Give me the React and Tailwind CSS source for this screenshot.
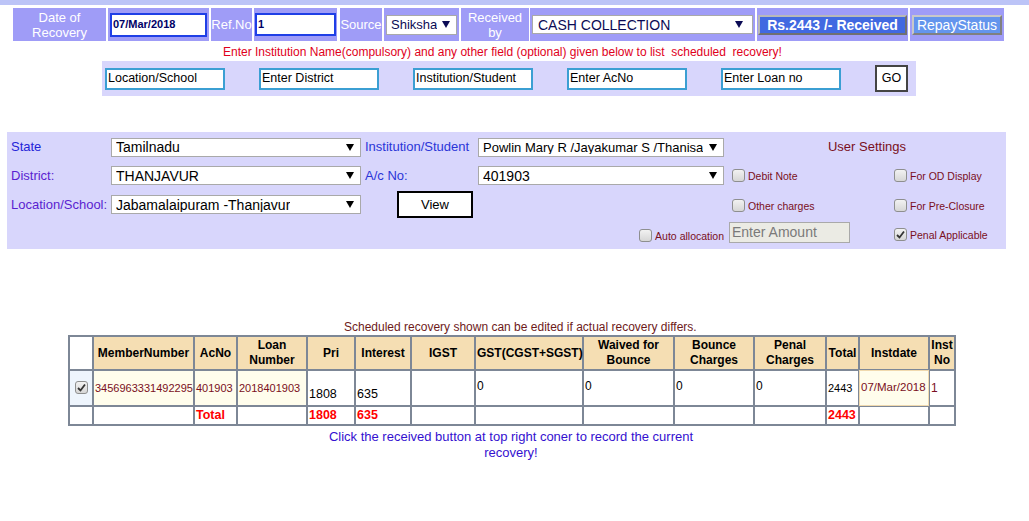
import React from "react";

// arrow used by the fake select boxes
const Arrow = ({ color = "#000" }) => (
  <svg width="8" height="7" viewBox="0 0 8 7" className="shrink-0">
    <polygon points="0,0 8,0 4,7" fill={color} />
  </svg>
);

const Select = ({ value, className = "", text = "text-black text-[14px]", arrow = "#000" }) => (
  <div
    className={`flex items-center justify-between gap-[4px] bg-white border border-[#a9a9a9] pl-[4px] pr-[6px] leading-none font-['Liberation_Sans',Arial,sans-serif] ${text} ${className}`}
  >
    <span className="whitespace-nowrap overflow-hidden">{value}</span>
    <Arrow color={arrow} />
  </div>
);

const Check = ({ checked = false }) => (
  <span className="inline-flex w-[13px] h-[13px] shrink-0 items-center justify-center rounded-[3px] border border-[#8e8f8f] bg-gradient-to-b from-[#f2f2f2] to-[#d6d6d6]">
    {checked && (
      <svg width="9" height="9" viewBox="0 0 9 9">
        <path d="M1 5 L3.5 7.5 L8 1.5" fill="none" stroke="#333" strokeWidth="1.8" />
      </svg>
    )}
  </span>
);

const HeadCell = ({ className = "", children }) => (
  <div className={`bg-[#9f9cf7] flex items-center justify-center text-white text-[13px] leading-[15px] text-center ${className}`}>
    {children}
  </div>
);

const Opt = ({ label, checked }) => (
  <div className="flex items-center gap-[3px]">
    <Check checked={checked} />
    <span className="text-[10.5px] text-[#7a0f22] mt-[3px]">{label}</span>
  </div>
);

const cols = [24, 101, 43, 70, 48, 56, 64, 108, 91, 80, 72, 33, 70, 26];

const th = "border border-[#7d8796] bg-[#f5deb3] font-bold text-[12px] leading-[15px] text-center px-[1px]";
const td = "border border-[#7d8796] text-[11px] px-[1px]";
const tot = "border border-[#7d8796] text-[#ff0000] font-bold text-[12.5px] leading-[15px] px-[1px]";

export default function App() {
  return (
    <div className="w-[1029px] h-[521px] bg-white overflow-hidden font-['Liberation_Sans',Arial,sans-serif]">
      <div className="h-[5px] bg-[#bcc4f7]" />

      {/* header row */}
      <div className="flex gap-[2px] ml-[13px] mt-[3px] h-[33px]">
        <HeadCell className="w-[93px]">
          Date of
          <br />
          Recovery
        </HeadCell>
        <div className="w-[101px] bg-[#9f9cf7] flex items-center px-[2px]">
          <div className="w-full h-[24px] border-2 border-[#1f3fe6] bg-white flex items-center pl-px text-[11px] font-bold text-[#000066]">
            07/Mar/2018
          </div>
        </div>
        <HeadCell className="w-[41px]">Ref.No</HeadCell>
        <div className="w-[83px] bg-[#9f9cf7] flex items-center px-[1px]">
          <div className="w-full h-[23px] border-2 border-[#1f3fe6] bg-white flex items-center pl-px text-[11px] font-bold text-[#000066]">
            1
          </div>
        </div>
        <HeadCell className="w-[42px] ml-px">Source</HeadCell>
        <div className="w-[75px] bg-[#9f9cf7] flex items-center px-[2px]">
          <Select value="Shiksha" className="w-full h-[20px] pl-[4px] pr-[4px]" text="text-[#0b0b55] text-[13px]" arrow="#0b0b55" />
        </div>
        <HeadCell className="w-[68px]">
          Received
          <br />
          by
        </HeadCell>
        <div className="w-[225px] bg-[#9f9cf7] flex items-center px-[2px] -ml-px">
          <Select value="CASH COLLECTION" className="w-full h-[19px] pl-[5px] pr-[9px]" text="text-[#0b0b55] text-[14px]" arrow="#0b0b55" />
        </div>
        <div className="w-[151px] bg-[#9f9cf7] flex items-center px-px">
          <button className="w-full h-[20px] bg-[#4169e1] border-2 border-t-[#b8b8b8] border-l-[#b8b8b8] border-b-[#707070] border-r-[#707070] text-white font-bold text-[14px] leading-none">
            Rs.2443 /- Received
          </button>
        </div>
        <div className="w-[94px] bg-[#9f9cf7] flex items-center px-[2px]">
          <button className="w-full h-[20px] bg-[#6495ed] border-2 border-t-[#c8c8c8] border-l-[#c8c8c8] border-b-[#808080] border-r-[#808080] text-white text-[14px] leading-none">
            RepayStatus
          </button>
        </div>
      </div>

      <p className="mt-[3px] h-[17px] leading-[17px] text-[12px] text-[#e0001b] pl-[223px] whitespace-pre">
        Enter Institution Name(compulsory) and any other field (optional) given below to list  scheduled  recovery!
      </p>

      {/* quick search */}
      <div className="ml-[102px] w-[814px] h-[35px] bg-[#d8d6fc] flex items-center pl-[3px] gap-[34px]">
        {["Location/School", "Enter District", "Institution/Student", "Enter AcNo", "Enter Loan no"].map((p) => (
          <div
            key={p}
            className="w-[120px] h-[22px] border-2 border-[#3b9fd3] bg-white flex items-center pl-px text-[12.5px] text-black whitespace-nowrap overflow-hidden"
          >
            {p}
          </div>
        ))}
        <button className="w-[33px] h-[27px] border-2 border-[#444] bg-white text-[12.5px] text-black">GO</button>
      </div>

      {/* filter panel */}
      <div className="ml-[7px] mt-[36px] w-[999px] h-[117px] bg-[#d8d6fc] pt-px pl-[4px] grid grid-cols-[100px_254px_113px_250px_162px_1fr] grid-rows-[28px_29px_29px_29px] items-center text-[13px]">
        <span className="text-[#2424d8]">State</span>
        <Select value="Tamilnadu" className="w-[250px] h-[19px]" />
        <span className="text-[#2a35d8]">Institution/Student</span>
        <Select value="Powlin Mary R /Jayakumar S /Thanisa" className="w-[246px] h-[19px] pr-[5px]" text="text-black text-[13px]" />
        <span className="col-span-2 text-center text-[#7a0f22] text-[13px]">User Settings</span>

        <span className="text-[#5a1fd0]">District:</span>
        <Select value="THANJAVUR" className="w-[250px] h-[19px]" />
        <span className="text-[#2a35d8]">A/c No:</span>
        <Select value="401903" className="w-[246px] h-[19px]" />
        <div className="pl-[4px]">
          <Opt label="Debit Note" />
        </div>
        <div className="pl-[4px]">
          <Opt label="For OD Display" />
        </div>

        <span className="text-[#5a1fd0]">Location/School:</span>
        <Select value="Jabamalaipuram -Thanjavur" className="w-[250px] h-[19px]" />
        <div className="col-span-2 pl-[32px]">
          <button className="w-[76px] h-[27px] border-2 border-black bg-white text-[13px] text-black">View</button>
        </div>
        <div className="pl-[4px] mt-[2px]">
          <Opt label="Other charges" />
        </div>
        <div className="pl-[4px] mt-[2px]">
          <Opt label="For Pre-Closure" />
        </div>

        <span />
        <span />
        <div className="col-span-2 flex justify-end pr-[4px] mt-[4px]">
          <Opt label="Auto allocation" />
        </div>
        <div className="pl-px mt-[-2px]">
          <div className="w-[121px] h-[21px] border border-[#a9a9a9] bg-[#ebebe4] flex items-center pl-[2px] text-[14px] text-[#7a7a7a]">
            Enter Amount
          </div>
        </div>
        <div className="pl-[4px] mt-[2px]">
          <Opt label="Penal Applicable" checked />
        </div>
      </div>

      <p className="mt-[71px] h-[15px] leading-[15px] text-[12px] text-[#6e1a1a] pl-[344px]">
        Scheduled recovery shown can be edited if actual recovery differs.
      </p>

      {/* schedule table */}
      <table className="ml-[68px] border-separate border-spacing-0 border border-[#7d8796] table-fixed w-[886px]">
        <colgroup>
          {cols.map((w, i) => (
            <col key={i} style={{ width: w }} />
          ))}
        </colgroup>
        <thead>
          <tr className="h-[34px]">
            <th className="border border-[#7d8796] bg-white" />
            <th className={th}>MemberNumber</th>
            <th className={th}>AcNo</th>
            <th className={th}>
              Loan
              <br />
              Number
            </th>
            <th className={th}>Pri</th>
            <th className={th}>Interest</th>
            <th className={th}>IGST</th>
            <th className={`${th} whitespace-nowrap`}>GST(CGST+SGST)</th>
            <th className={th}>
              Waived for
              <br />
              Bounce
            </th>
            <th className={th}>
              Bounce
              <br />
              Charges
            </th>
            <th className={th}>
              Penal
              <br />
              Charges
            </th>
            <th className={th}>Total</th>
            <th className={th}>Instdate</th>
            <th className={th}>
              Inst
              <br />
              No
            </th>
          </tr>
        </thead>
        <tbody>
          <tr className="h-[36px]">
            <td className={`${td} bg-[#eef5fd] text-center`}>
              <span className="inline-flex mt-[2px]">
                <Check checked />
              </span>
            </td>
            <td className={`${td} bg-[#fffdec] text-[#7a0f22] whitespace-nowrap overflow-hidden`}>3456963331492295</td>
            <td className={`${td} bg-[#fffdec] text-[#7a0f22]`}>401903</td>
            <td className={`${td} bg-[#fffdec] text-[#7a0f22]`}>2018401903</td>
            <td className={`${td} text-black align-bottom text-[12.5px] pb-[1px]`}>1808</td>
            <td className={`${td} text-black align-bottom text-[12.5px] pb-[1px]`}>635</td>
            <td className={td} />
            <td className={`${td} text-black align-top pt-[6px] text-[12px]`}>0</td>
            <td className={`${td} text-black align-top pt-[6px] text-[12px]`}>0</td>
            <td className={`${td} text-black align-top pt-[6px] text-[12px]`}>0</td>
            <td className={`${td} text-black align-top pt-[6px] text-[12px]`}>0</td>
            <td className={`${td} text-black`}>2443</td>
            <td className="border border-[#f0d9ae] bg-[#fffdec] text-[#7a0f22] text-[11.5px] px-[1px] whitespace-nowrap">07/Mar/2018</td>
            <td className={`${td} text-[#7a0f22] text-[12px]`}>1</td>
          </tr>
          <tr className="h-[19px]">
            <td className={td} />
            <td className={td} />
            <td className={tot}>Total</td>
            <td className={td} />
            <td className={tot}>1808</td>
            <td className={tot}>635</td>
            <td className={td} />
            <td className={td} />
            <td className={td} />
            <td className={td} />
            <td className={td} />
            <td className={tot}>2443</td>
            <td className={td} />
            <td className={td} />
          </tr>
        </tbody>
      </table>

      <div className="ml-[68px] w-[886px] mt-[3px]">
        <p className="w-[400px] mx-auto text-center text-[13px] leading-[16px] text-[#3410d0]">
          Click the received button at top right coner to record the current recovery!
        </p>
      </div>
    </div>
  );
}
